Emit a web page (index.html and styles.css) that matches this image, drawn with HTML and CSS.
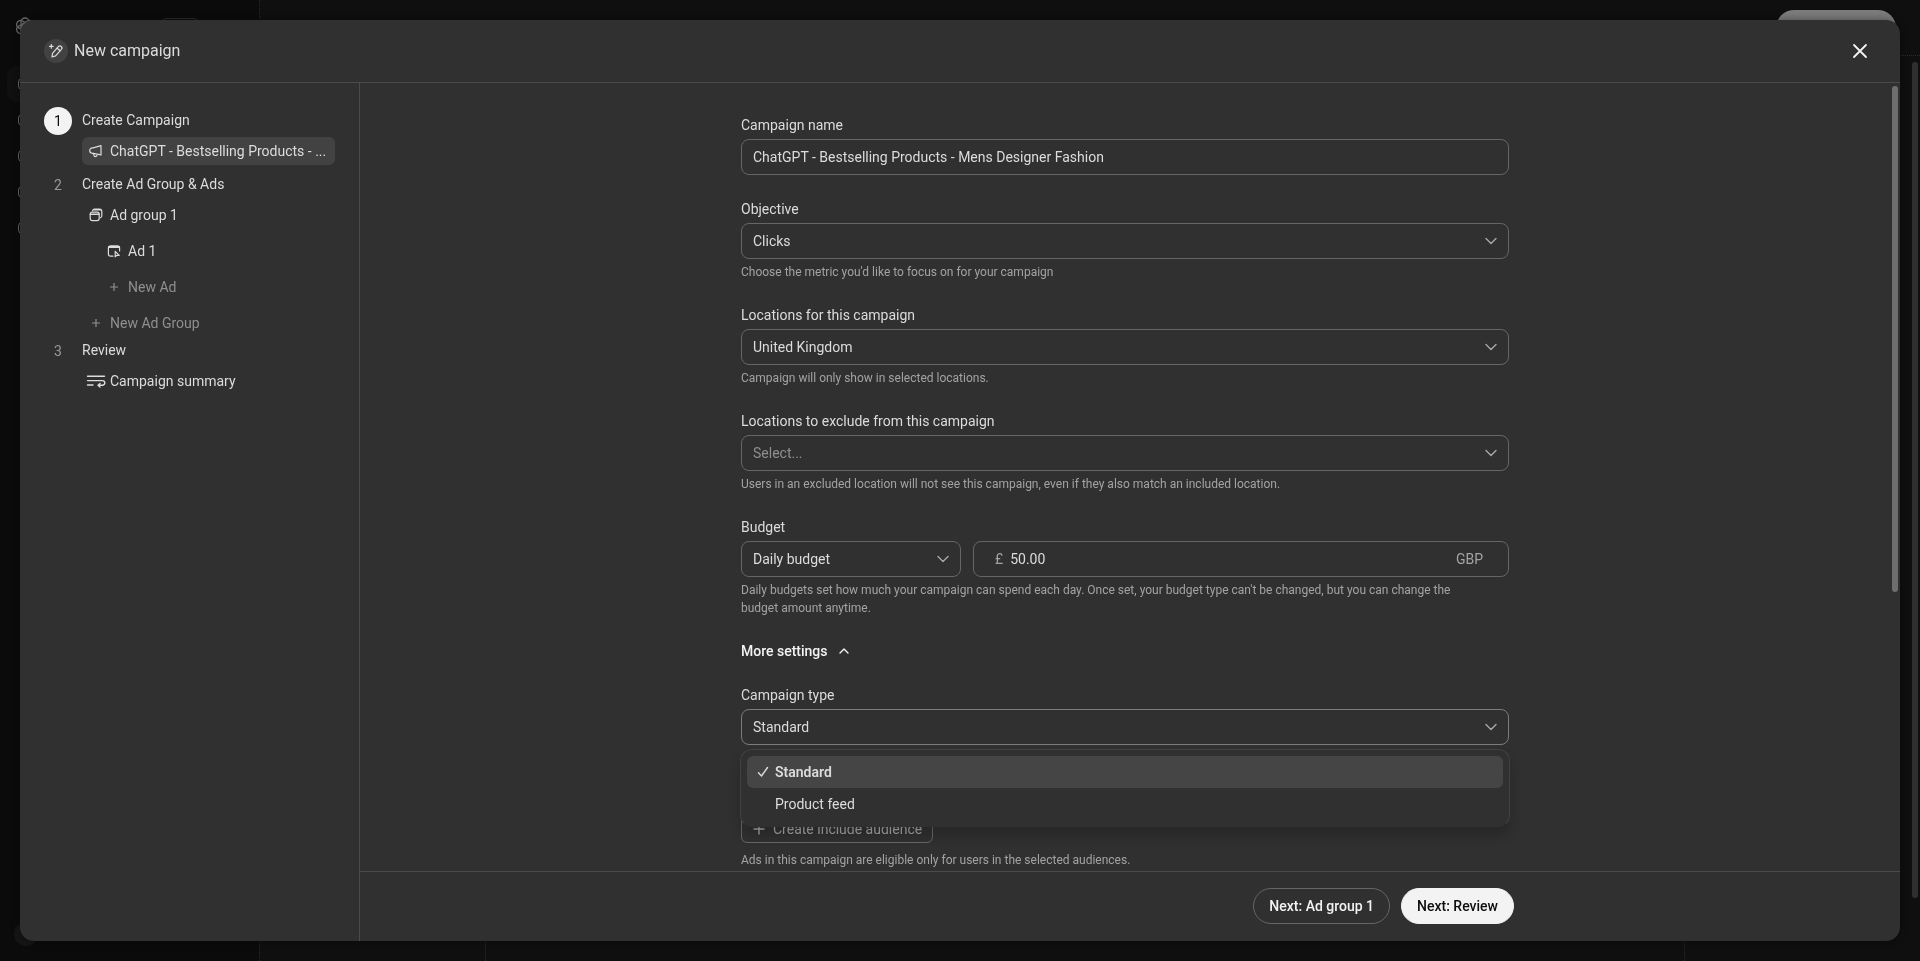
FILE: index.html
```html
<!DOCTYPE html>
<html lang="en">
<head>
    <meta charset="UTF-8">
    <meta name="viewport" content="width=device-width, initial-scale=1.0">
    <title>New campaign</title>
    <link rel="stylesheet" href="styles.css">
</head>
<body>
    <!-- Dimmed page behind the dialog -->
    <div class="page" aria-hidden="true">
        <div class="page-nav">
            <svg class="page-logo" width="20" height="20" viewBox="0 0 20 20" fill="none" stroke="currentColor" stroke-width="1.4">
                <rect x="6" y="1" width="8" height="12" rx="4"/>
                <rect x="6" y="1" width="8" height="12" rx="4" transform="rotate(60 10 10)"/>
                <rect x="6" y="1" width="8" height="12" rx="4" transform="rotate(120 10 10)"/>
                <rect x="6" y="1" width="8" height="12" rx="4" transform="rotate(180 10 10)"/>
                <rect x="6" y="1" width="8" height="12" rx="4" transform="rotate(240 10 10)"/>
                <rect x="6" y="1" width="8" height="12" rx="4" transform="rotate(300 10 10)"/>
            </svg>
            <span class="page-badge"></span>
            <span class="page-link current"><i></i></span>
            <span class="page-link"><i></i></span>
            <span class="page-link"><i></i></span>
            <span class="page-link"><i></i></span>
            <span class="page-link"><i></i></span>
            <span class="page-avatar"></span>
        </div>
        <div class="page-main">
            <div class="page-top"><span class="page-button"></span></div>
            <div class="page-content"></div>
            <span class="page-scroll"></span>
        </div>
    </div>

    <div class="dialog" role="dialog" aria-labelledby="dialog-title">
        <header class="dialog-header">
            <span class="header-icon">
                <svg width="16" height="16" viewBox="0 0 16 16" fill="none" stroke="currentColor" stroke-width="1.2" stroke-linecap="round" stroke-linejoin="round">
                    <path d="M4 14l.5-3.700 5.800-6.600a2 2 0 0 1 3.100 2.600l-5.800 6.600z"/>
                    <path d="M9.200 5.200l2.900 2.500M3.300 1.600v3.600M1.500 3.400h3.600"/>
                </svg>
            </span>
            <h1 id="dialog-title">New campaign</h1>
            <button class="close" type="button" aria-label="Close">
                <svg width="16" height="16" viewBox="0 0 16 16" fill="none" stroke="currentColor" stroke-width="1.800" stroke-linecap="round">
                    <path d="M2 2l12 12M14 2L2 14"/>
                </svg>
            </button>
        </header>

        <div class="dialog-body">
            <nav class="steps">
                <section class="step active">
                    <span class="step-number">1</span>
                    <div class="step-content">
                        <h2>Create Campaign</h2>
                        <a class="item selected" href="#">
                            <svg width="14" height="14" viewBox="0 0 14 14" fill="none" stroke="currentColor" stroke-width="1.200" stroke-linecap="round" stroke-linejoin="round">
                                <path d="M4.200 3.900L12 1.700v9.200L4.200 9.300H3.400a2.600 2.600 0 0 1 0-5.400h.8M4.600 9.400l.3 1.900a1.500 1.500 0 0 0 2.900.2l.4-1.300"/>
                            </svg>
                            <span>ChatGPT - Bestselling Products - ...</span>
                        </a>
                    </div>
                </section>

                <section class="step">
                    <span class="step-number">2</span>
                    <div class="step-content">
                        <h2>Create Ad Group &amp; Ads</h2>
                        <a class="item" href="#">
                            <svg width="14" height="14" viewBox="0 0 14 14" fill="none" stroke="currentColor" stroke-width="1.200" stroke-linecap="round" stroke-linejoin="round">
                                <rect x="1.200" y="4.200" width="9" height="8.400" rx="2"/>
                                <path d="M1.300 6.400h8.800M1.500 6h8.400M3.600 2.600c.3-.9 1-1.400 1.900-1.400h5a2.300 2.300 0 0 1 2.300 2.300v4.200c0 1-.5 1.700-1.300 2M3.800 2h8.200"/>
                            </svg>
                            <span>Ad group 1</span>
                        </a>
                        <a class="item nested" href="#">
                            <svg width="14" height="14" viewBox="0 0 14 14" fill="none" stroke="currentColor" stroke-width="1.200" stroke-linecap="round" stroke-linejoin="round">
                                <path d="M6 12.200H3.600a2.200 2.200 0 0 1-2.200-2.200V4a2.200 2.200 0 0 1 2.200-2.200h6.800A2.200 2.200 0 0 1 12.600 4v3"/>
                                <path d="M1.800 3h10.400" stroke-width="1.800"/>
                                <path d="M8.200 7.300v5.500l1.500-1.400h2.500z"/>
                            </svg>
                            <span>Ad 1</span>
                        </a>
                        <button class="item nested add" type="button">
                            <svg width="14" height="14" viewBox="0 0 14 14" fill="none" stroke="currentColor" stroke-width="1.200">
                                <path d="M7 3v8M3 7h8"/>
                            </svg>
                            <span>New Ad</span>
                        </button>
                        <button class="item add" type="button">
                            <svg width="14" height="14" viewBox="0 0 14 14" fill="none" stroke="currentColor" stroke-width="1.200">
                                <path d="M7 3v8M3 7h8"/>
                            </svg>
                            <span>New Ad Group</span>
                        </button>
                    </div>
                </section>

                <section class="step">
                    <span class="step-number">3</span>
                    <div class="step-content">
                        <h2>Review</h2>
                        <a class="item summary" href="#">
                            <svg width="20" height="14" viewBox="0 0 20 14" fill="none" stroke="currentColor" stroke-width="1.400" stroke-linecap="round" stroke-linejoin="round">
                                <path d="M1.500 2.200h17M1.500 6.600h15a2.300 2.300 0 0 1 0 4.600h-4M14 9.400l-2 1.800 2 1.800M1.500 11h5.500"/>
                            </svg>
                            <span>Campaign summary</span>
                        </a>
                    </div>
                </section>
            </nav>

            <div class="main">
                <div class="form-scroll">
                    <form class="form">
                        <div class="field">
                            <label for="name">Campaign name</label>
                            <input class="control" id="name" type="text" value="ChatGPT - Bestselling Products - Mens Designer Fashion">
                        </div>

                        <div class="field">
                            <label for="objective">Objective</label>
                            <div class="select">
                                <select class="control" id="objective">
                                    <option>Clicks</option>
                                </select>
                                <svg width="12" height="12" viewBox="0 0 12 12"><path d="M1 3.500l5 5 5-5"/></svg>
                            </div>
                            <p class="hint">Choose the metric you'd like to focus on for your campaign</p>
                        </div>

                        <div class="field">
                            <label for="locations">Locations for this campaign</label>
                            <div class="select">
                                <select class="control" id="locations">
                                    <option>United Kingdom</option>
                                </select>
                                <svg width="12" height="12" viewBox="0 0 12 12"><path d="M1 3.500l5 5 5-5"/></svg>
                            </div>
                            <p class="hint">Campaign will only show in selected locations.</p>
                        </div>

                        <div class="field">
                            <label for="exclude">Locations to exclude from this campaign</label>
                            <div class="select">
                                <select class="control empty" id="exclude">
                                    <option>Select...</option>
                                </select>
                                <svg width="12" height="12" viewBox="0 0 12 12"><path d="M1 3.500l5 5 5-5"/></svg>
                            </div>
                            <p class="hint">Users in an excluded location will not see this campaign, even if they also match an included location.</p>
                        </div>

                        <div class="field">
                            <label for="budget-type">Budget</label>
                            <div class="budget">
                                <div class="select">
                                    <select class="control" id="budget-type">
                                        <option>Daily budget</option>
                                    </select>
                                    <svg width="12" height="12" viewBox="0 0 12 12"><path d="M1 3.500l5 5 5-5"/></svg>
                                </div>
                                <div class="control amount">
                                    <span>£</span>
                                    <input type="text" aria-label="Budget amount" value="50.00">
                                    <span>GBP</span>
                                </div>
                            </div>
                            <p class="hint">Daily budgets set how much your campaign can spend each day. Once set, your budget type can't be changed, but you can change the budget amount anytime.</p>
                        </div>

                        <button class="more" type="button">
                            More settings
                            <svg width="12" height="12" viewBox="0 0 12 12"><path d="M2 8l4-4 4 4"/></svg>
                        </button>

                        <div class="field">
                            <label for="type">Campaign type</label>
                            <div class="select open">
                                <select class="control" id="type">
                                    <option>Standard</option>
                                    <option>Product feed</option>
                                </select>
                                <svg width="12" height="12" viewBox="0 0 12 12"><path d="M1 3.500l5 5 5-5"/></svg>
                                <div class="menu" role="listbox" aria-label="Campaign type">
                                    <button class="option chosen" type="button" role="option" aria-selected="true">
                                        <svg width="12" height="12" viewBox="0 0 12 12"><path d="M1.500 6.800l3 3.200 6-8.500"/></svg>
                                        Standard
                                    </button>
                                    <button class="option" type="button" role="option" aria-selected="false">Product feed</button>
                                </div>
                            </div>
                        </div>

                        <div class="field audience">
                            <button class="create" type="button">
                                <svg width="12" height="12" viewBox="0 0 12 12"><path d="M6 1v10M1 6h10"/></svg>
                                Create include audience
                            </button>
                            <p class="hint">Ads in this campaign are eligible only for users in the selected audiences.</p>
                        </div>
                    </form>
                </div>
                <span class="scroll-thumb"></span>

                <footer class="dialog-footer">
                    <div class="actions">
                        <button class="btn" type="button">Next: Ad group 1</button>
                        <button class="btn primary" type="button">Next: Review</button>
                    </div>
                </footer>
            </div>
        </div>
    </div>
</body>
</html>
```

FILE: styles.css
```css
* {
    box-sizing: border-box;
}

body {
    margin: 0;
    height: 100vh;
    overflow: hidden;
    background: #0f0f0f;
    color: #dcdcdc;
    font-family: Roboto, "Liberation Sans", sans-serif;
    font-size: 14px;
    line-height: 20px;
}

h1, h2, p {
    margin: 0;
    font-weight: 400;
}

button, input, select {
    font: inherit;
    color: inherit;
}

button {
    padding: 0;
    border: none;
    background: none;
    cursor: pointer;
}

a {
    color: inherit;
    text-decoration: none;
}

/* Page behind the dialog */
.page {
    display: flex;
    height: 100%;
}

.page-nav {
    position: relative;
    width: 260px;
    padding-top: 66px;
    background: #0b0b0b;
    border-right: 1px dotted #2a2a2a;
}

.page-logo {
    position: absolute;
    top: 17px;
    left: 15px;
    color: #6a6a6a;
}

.page-badge {
    position: absolute;
    top: 18px;
    left: 162px;
    width: 36px;
    height: 20px;
    border: 1px solid #2c2c2c;
    border-radius: 4px;
}

.page-link {
    display: flex;
    align-items: center;
    height: 36px;
    margin-left: 7px;
    padding-left: 11px;
    border-radius: 10px;
}

.page-link.current {
    background: #101010;
}

.page-link i {
    width: 14px;
    height: 12px;
    border: 1px solid #6a6a6a;
    border-radius: 4px;
}

.page-avatar {
    position: absolute;
    left: 14px;
    bottom: 15px;
    width: 24px;
    height: 24px;
    border-radius: 50%;
    background: #151515;
}

.page-main {
    position: relative;
    flex: 1;
    display: flex;
    flex-direction: column;
}

.page-top {
    display: flex;
    justify-content: flex-end;
    height: 56px;
    padding: 10px 24px;
    border-bottom: 1px dotted #2a2a2a;
}

.page-button {
    width: 120px;
    height: 36px;
    border-radius: 18px;
    background: #7c7c7c;
}

.page-content {
    flex: 1;
    margin: 0 235px 0 225px;
    border: 1px dotted #2a2a2a;
    border-width: 0 1px;
}

.page-scroll {
    position: absolute;
    top: 62px;
    right: 2px;
    bottom: 63px;
    width: 6px;
    border-radius: 3px;
    background: #2f2f2f;
}

/* Dialog */
.dialog {
    position: fixed;
    inset: 20px;
    display: flex;
    flex-direction: column;
    overflow: hidden;
    border-radius: 14px;
    background: #303030;
    box-shadow: 0 0 8px rgba(0, 0, 0, 0.4);
}

.dialog-header {
    display: flex;
    align-items: center;
    gap: 6px;
    height: 63px;
    padding: 0 24px;
    border-bottom: 1px solid #4a4a4a;
}

.header-icon {
    display: flex;
    align-items: center;
    justify-content: center;
    width: 24px;
    height: 24px;
    border-radius: 50%;
    background: #424242;
}

.dialog-header h1 {
    font-size: 16px;
    line-height: 24px;
}

.close {
    display: flex;
    align-items: center;
    justify-content: center;
    width: 32px;
    height: 32px;
    margin-left: auto;
    color: #f3f3f3;
}

.dialog-body {
    flex: 1;
    display: flex;
    min-height: 0;
}

/* Steps */
.steps {
    width: 340px;
    padding: 24px;
    border-right: 1px solid #4a4a4a;
}

.step {
    display: flex;
    gap: 10px;
}

.step.active {
    padding-bottom: 6px;
}

.step-number {
    display: flex;
    align-items: center;
    justify-content: center;
    width: 28px;
    height: 28px;
    border-radius: 50%;
    color: #999;
}

.step.active .step-number {
    background: #f3f3f3;
    color: #0d0d0d;
}

.step-content {
    flex: 1;
    display: flex;
    flex-direction: column;
    gap: 8px;
    min-width: 0;
}

.step h2 {
    height: 22px;
    padding-top: 3px;
    font-size: 14px;
    line-height: 20px;
}

.item {
    display: flex;
    align-items: center;
    gap: 7px;
    height: 28px;
    padding: 0 4px 0 7px;
    border-radius: 6px;
    text-align: left;
}

.item svg {
    flex-shrink: 0;
}

.item span {
    overflow: hidden;
    text-overflow: ellipsis;
    white-space: nowrap;
}

.item.selected {
    background: #424242;
}

.item.nested {
    margin-left: 18px;
}

.item.summary {
    gap: 4px;
    padding-left: 4px;
}

.item.add {
    color: #8f8f8f;
}

/* Form */
.main {
    position: relative;
    flex: 1;
    display: flex;
    flex-direction: column;
    min-width: 0;
}

.form-scroll {
    flex: 1;
    padding: 32px 10px 0 0;
    overflow: auto;
    scrollbar-width: none;
}

.form {
    display: flex;
    flex-direction: column;
    gap: 24px;
    max-width: 768px;
    margin: 0 auto;
}

.field {
    display: flex;
    flex-direction: column;
    gap: 4px;
}

.control {
    width: 100%;
    height: 36px;
    padding: 0 11px;
    border: 1px solid #666;
    border-radius: 8px;
    background: #303030;
    appearance: none;
    outline: none;
}

.select {
    position: relative;
}

.select svg, .more svg, .create svg {
    fill: none;
    stroke: currentColor;
    stroke-width: 1.4;
    stroke-linecap: round;
    stroke-linejoin: round;
}

.select > svg {
    position: absolute;
    top: 12px;
    right: 12px;
    color: #a8a8a8;
    pointer-events: none;
}

.open .control {
    border-color: #7c7c7c;
}

.control.empty {
    color: #8f8f8f;
}

.hint {
    padding-right: 24px;
    font-size: 12px;
    line-height: 18px;
    color: #a3a3a3;
}

.budget {
    display: grid;
    grid-template-columns: 220px 1fr;
    gap: 12px;
}

.amount {
    display: flex;
    align-items: center;
    gap: 7px;
    padding: 0 25px 0 21px;
    color: #a3a3a3;
}

.amount input {
    flex: 1;
    min-width: 0;
    padding: 0;
    border: none;
    background: none;
    color: #dcdcdc;
    outline: none;
}

.more {
    display: flex;
    align-items: center;
    gap: 10px;
    align-self: flex-start;
    color: #f3f3f3;
    font-weight: 500;
}

.menu {
    position: absolute;
    top: 40px;
    left: -1px;
    right: -1px;
    z-index: 1;
    padding: 6px;
    border: 1px solid #424242;
    border-bottom-color: #303030;
    border-radius: 12px;
    background: #303030;
    box-shadow: 0 8px 12px rgba(0, 0, 0, 0.2);
}

.option {
    display: flex;
    align-items: center;
    gap: 6px;
    width: 100%;
    height: 32px;
    padding-left: 28px;
    border-radius: 6px;
    text-align: left;
}

.option.chosen {
    padding-left: 10px;
    background: #454545;
    font-weight: 600;
}

.field.audience {
    gap: 8px;
    margin-top: 46px;
}

.create {
    display: flex;
    align-items: center;
    gap: 8px;
    align-self: flex-start;
    height: 28px;
    padding: 0 10px 0 11px;
    border: 1px solid #666;
    border-radius: 6px;
    color: #a3a3a3;
}

.scroll-thumb {
    position: absolute;
    top: 3px;
    right: 2px;
    width: 6px;
    height: 59%;
    border-radius: 3px;
    background: #6e6e6e;
}

/* Footer */
.dialog-footer {
    height: 70px;
    padding-top: 16px;
    border-top: 1px solid #4a4a4a;
}

.actions {
    display: flex;
    justify-content: flex-end;
    gap: 11px;
    max-width: 768px;
    margin: 0 auto;
}

.btn {
    height: 36px;
    padding: 0 15px;
    border: 1px solid #666;
    border-radius: 18px;
    color: #f3f3f3;
    font-weight: 500;
}

.btn.primary {
    border-color: #f3f3f3;
    background: #f3f3f3;
    color: #0d0d0d;
}
```
